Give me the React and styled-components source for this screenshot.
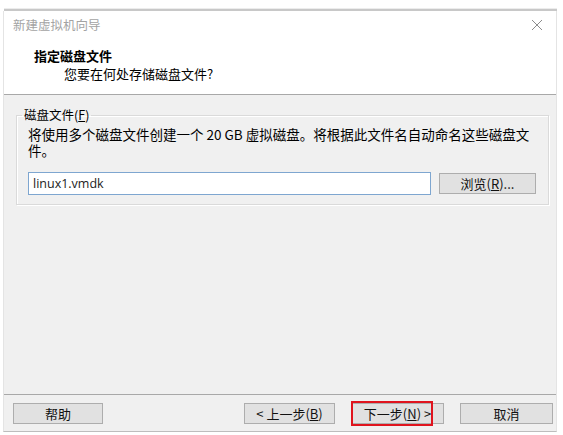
import React from 'react'
import styled, { createGlobalStyle } from 'styled-components'

const GlobalStyle = createGlobalStyle`
  html, body {
    margin: 0;
    padding: 0;
    background: #ffffff;
  }
  body {
    font-family: "Noto Sans CJK SC", "Microsoft YaHei", "Noto Sans", sans-serif;
    color: #000;
  }
`

const Page = styled.div`
  width: 563px;
  height: 435px;
  background: #fff;
  overflow: hidden;
  display: flex;
  flex-direction: column;
`

const TopStrip = styled.div`
  height: 9px;
  margin: 0 6px 0 4px;
  border-bottom: 2px solid #c8c8c8;
  box-shadow: 0 -1px 0 #ececec inset;
`

const Dialog = styled.div`
  flex: 1;
  margin: 0 6px 3px 3px;
  border-left: 1px solid #e4e4e4;
  border-right: 1px solid #e4e4e4;
  border-bottom: 1px solid #bdbdbd;
  display: flex;
  flex-direction: column;
  background: #f0f0f0;
`

const TitleBar = styled.div`
  height: 27px;
  background: #fff;
  display: flex;
  align-items: center;
  justify-content: space-between;
  padding: 0 8px 1px 9px;
`

const TitleText = styled.span`
  font-size: 12.5px;
  color: #a3a3a3;
`

const Close = styled.svg`
  width: 12px;
  height: 12px;
  margin-right: 5px;
`

const Header = styled.div`
  background: #fff;
  height: 56px;
  padding: 8px 0 0 30px;
  box-sizing: border-box;
  border-bottom: 1px solid #a8a8a8;
`

const HeaderTitle = styled.div`
  font-size: 13px;
  font-weight: 700;
  line-height: 18px;
`

const HeaderSub = styled.div`
  font-size: 13px;
  line-height: 18px;
  padding-left: 30px;
`

const Body = styled.div`
  flex: 1;
  padding: 12px 8px 0 12px;
`

const Group = styled.fieldset`
  margin: 0;
  padding: 0 12px 12px 11px;
  border: 1px solid #dadada;
  box-shadow: 1px 1px 0 #fff inset, 1px 1px 0 #fff;
  height: 98px;
  box-sizing: border-box;
`

const Legend = styled.legend`
  font-size: 12.5px;
  padding: 0 2px;
  margin-left: -6px;
  line-height: 16px;
`

const Underline = styled.span`
  text-decoration: underline;
`

const Description = styled.div`
  margin-top: 3px;
`

const Line = styled.div`
  font-size: 13.5px;
  height: 16px;
  line-height: 16px;
  white-space: nowrap;
`

const FieldRow = styled.div`
  display: flex;
  align-items: center;
  gap: 8px;
  margin-top: 14px;
`

const TextInput = styled.div`
  width: 403px;
  height: 23px;
  box-sizing: border-box;
  background: #fff;
  border: 1px solid #7ea6d0;
  font-family: "Open Sans", "Noto Sans", sans-serif;
  font-size: 12.5px;
  line-height: 21px;
  padding-left: 4px;
  color: #222;
`

const Button = styled.div`
  width: ${p => p.$w || 90}px;
  height: 21px;
  box-sizing: border-box;
  background: #e1e1e1;
  border: 1px solid #adadad;
  font-size: 13px;
  display: flex;
  align-items: center;
  justify-content: center;
  position: relative;
  color: #111;
`

const Highlight = styled.div`
  position: absolute;
  left: -1px;
  top: -3px;
  right: 10px;
  bottom: -3px;
  border: 2px solid #e0141e;
`

const Footer = styled.div`
  height: 37px;
  border-top: 1px solid #a8a8a8;
  display: flex;
  align-items: center;
  padding: 1px 3px 0 9px;
  box-sizing: border-box;
`

const Spacer = styled.div`
  flex: 1;
`

const ButtonGroup = styled.div`
  display: flex;
  gap: 16px;
`

export default function App() {
  return (
    <Page>
      <GlobalStyle />
      <TopStrip />
      <Dialog>
        <TitleBar>
          <TitleText>新建虚拟机向导</TitleText>
          <Close viewBox="0 0 12 12">
            <path d="M1 1 L11 11 M11 1 L1 11" stroke="#8c8c8c" strokeWidth="1" fill="none" />
          </Close>
        </TitleBar>
        <Header>
          <HeaderTitle>指定磁盘文件</HeaderTitle>
          <HeaderSub>您要在何处存储磁盘文件?</HeaderSub>
        </Header>
        <Body>
          <Group>
            <Legend>磁盘文件(<Underline>F</Underline>)</Legend>
            <Description>
              <Line>将使用多个磁盘文件创建一个 20 GB 虚拟磁盘。将根据此文件名自动命名这些磁盘文</Line>
              <Line>件。</Line>
            </Description>
            <FieldRow>
              <TextInput>linux1.vmdk</TextInput>
              <Button $w={97}>浏览(<Underline>R</Underline>)...</Button>
            </FieldRow>
          </Group>
        </Body>
        <Footer>
          <Button $w={90}>帮助</Button>
          <Spacer />
          <ButtonGroup>
            <Button $w={91}>&lt; 上一步(<Underline>B</Underline>)</Button>
            <Button $w={93}>
              下一步(<Underline>N</Underline>) &gt;
              <Highlight />
            </Button>
            <Button $w={93}>取消</Button>
          </ButtonGroup>
        </Footer>
      </Dialog>
    </Page>
  )
}
